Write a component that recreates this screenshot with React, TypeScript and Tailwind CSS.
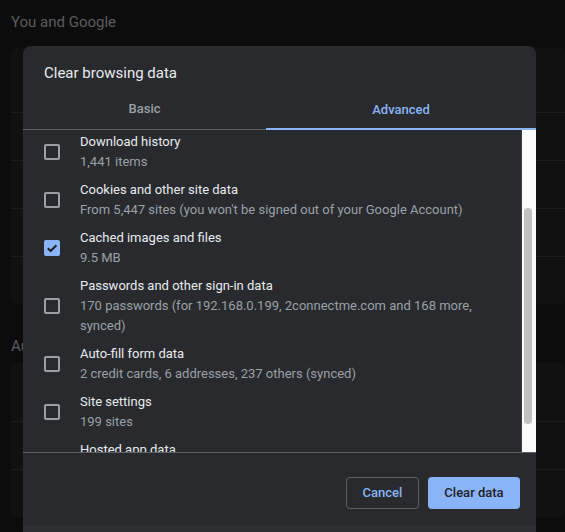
import React from 'react';

// --- Types ---
interface DataItem {
  title: string;
  detail: string;
  checked?: boolean;
}

const items: DataItem[] = [
  { title: 'Download history', detail: '1,441 items' },
  { title: 'Cookies and other site data', detail: "From 5,447 sites (you won't be signed out of your Google Account)" },
  { title: 'Cached images and files', detail: '9.5 MB', checked: true },
  { title: 'Passwords and other sign-in data', detail: '170 passwords (for 192.168.0.199, 2connectme.com and 168 more, synced)' },
  { title: 'Auto-fill form data', detail: '2 credit cards, 6 addresses, 237 others (synced)' },
  { title: 'Site settings', detail: '199 sites' },
  { title: 'Hosted app data', detail: '5 apps (Gmail, Google Drive and 3 more)' },
];

// --- Components ---

const Checkbox = ({ checked }: { checked?: boolean }) =>
  checked ? (
    <div className="w-4 h-4 rounded-[2px] bg-[#8ab4f8] flex items-center justify-center shrink-0">
      <svg width="12" height="12" viewBox="0 0 12 12" fill="none">
        <path d="M1.8 6.2 L4.6 9 L10.4 3.2" stroke="#202124" strokeWidth="2" />
      </svg>
    </div>
  ) : (
    <div className="w-4 h-4 rounded-[2px] border-2 border-[#9aa0a6] shrink-0" />
  );

const Row = ({ item }: { item: DataItem }) => (
  <div className="flex items-center mb-2">
    <div className="w-[57px] pl-[21px] shrink-0">
      <Checkbox checked={item.checked} />
    </div>
    <div className="flex flex-col pr-4 text-[13px] leading-5">
      <span className="text-[#e8eaed]">{item.title}</span>
      <span className="text-[#9aa0a6]">{item.detail}</span>
    </div>
  </div>
);

const BgCard = ({ rows, first, className }: { rows: number; first: string; className?: string }) => (
  <div className={`ml-[11px] rounded-md bg-[#111112] ${className ?? ''}`}>
    <div className={first} />
    {Array.from({ length: rows - 1 }).map((_, i) => (
      <div key={i} className="h-12 border-t border-[#1c1c1d]" />
    ))}
  </div>
);

export default function App() {
  return (
    <div
      className="relative w-[565px] h-[532px] overflow-hidden bg-[#0c0c0d]"
      style={{ fontFamily: 'Roboto, "Liberation Sans", sans-serif' }}
    >
      {/* Settings page behind the dialog */}
      <div className="pt-[12px]">
        <h2 className="pl-[11px] text-[15px] leading-5 text-[#5b5c5e]">You and Google</h2>
        <BgCard rows={5} first="h-16" className="mt-[16px]" />
        <h2 className="pl-[11px] mt-[32px] text-[15px] leading-5 text-[#5b5c5e]">Autofill</h2>
        <BgCard rows={3} first="h-[58px]" className="mt-[7px]" />
      </div>

      {/* Dialog */}
      <div className="absolute left-[23px] top-[46px] w-[513px] rounded-t-lg bg-[#292a2d] flex flex-col">
        <div className="pl-[21px] pt-[17px] text-[15px] leading-5 text-[#e8eaed]">Clear browsing data</div>

        <div className="mt-[6px] flex h-[41px] border-b border-[#5f6368] text-[13px] font-medium">
          <div className="w-[243px] flex items-center justify-center text-[#9aa0a6]">Basic</div>
          <div className="flex-1 flex items-center justify-center text-[#8ab4f8] border-b-2 border-[#8ab4f8] -mb-px pt-[2px]">
            Advanced
          </div>
        </div>

        <div className="flex h-[323px] border-b border-[#5f6368]">
          <div className="flex-1 overflow-hidden pt-[2px]">
            {items.map((item) => (
              <Row key={item.title} item={item} />
            ))}
          </div>
          <div className="w-[15px] bg-[#fafafa] border-l border-[#3c3d40] pt-[78px] pl-[2px]">
            <div className="w-[8px] h-[216px] rounded-full bg-[#c1c1c1]" />
          </div>
        </div>

        <div className="flex justify-end gap-[9px] pt-6 pb-4 pr-4">
          <button className="h-8 w-[73px] rounded border border-[#5f6368] text-[13px] font-medium text-[#8ab4f8]">
            Cancel
          </button>
          <button className="h-8 w-[92px] rounded bg-[#8ab4f8] text-[13px] font-medium text-[#202124]">
            Clear data
          </button>
        </div>
        <div className="h-10 bg-[#2d2f32]" />
      </div>
    </div>
  );
}
